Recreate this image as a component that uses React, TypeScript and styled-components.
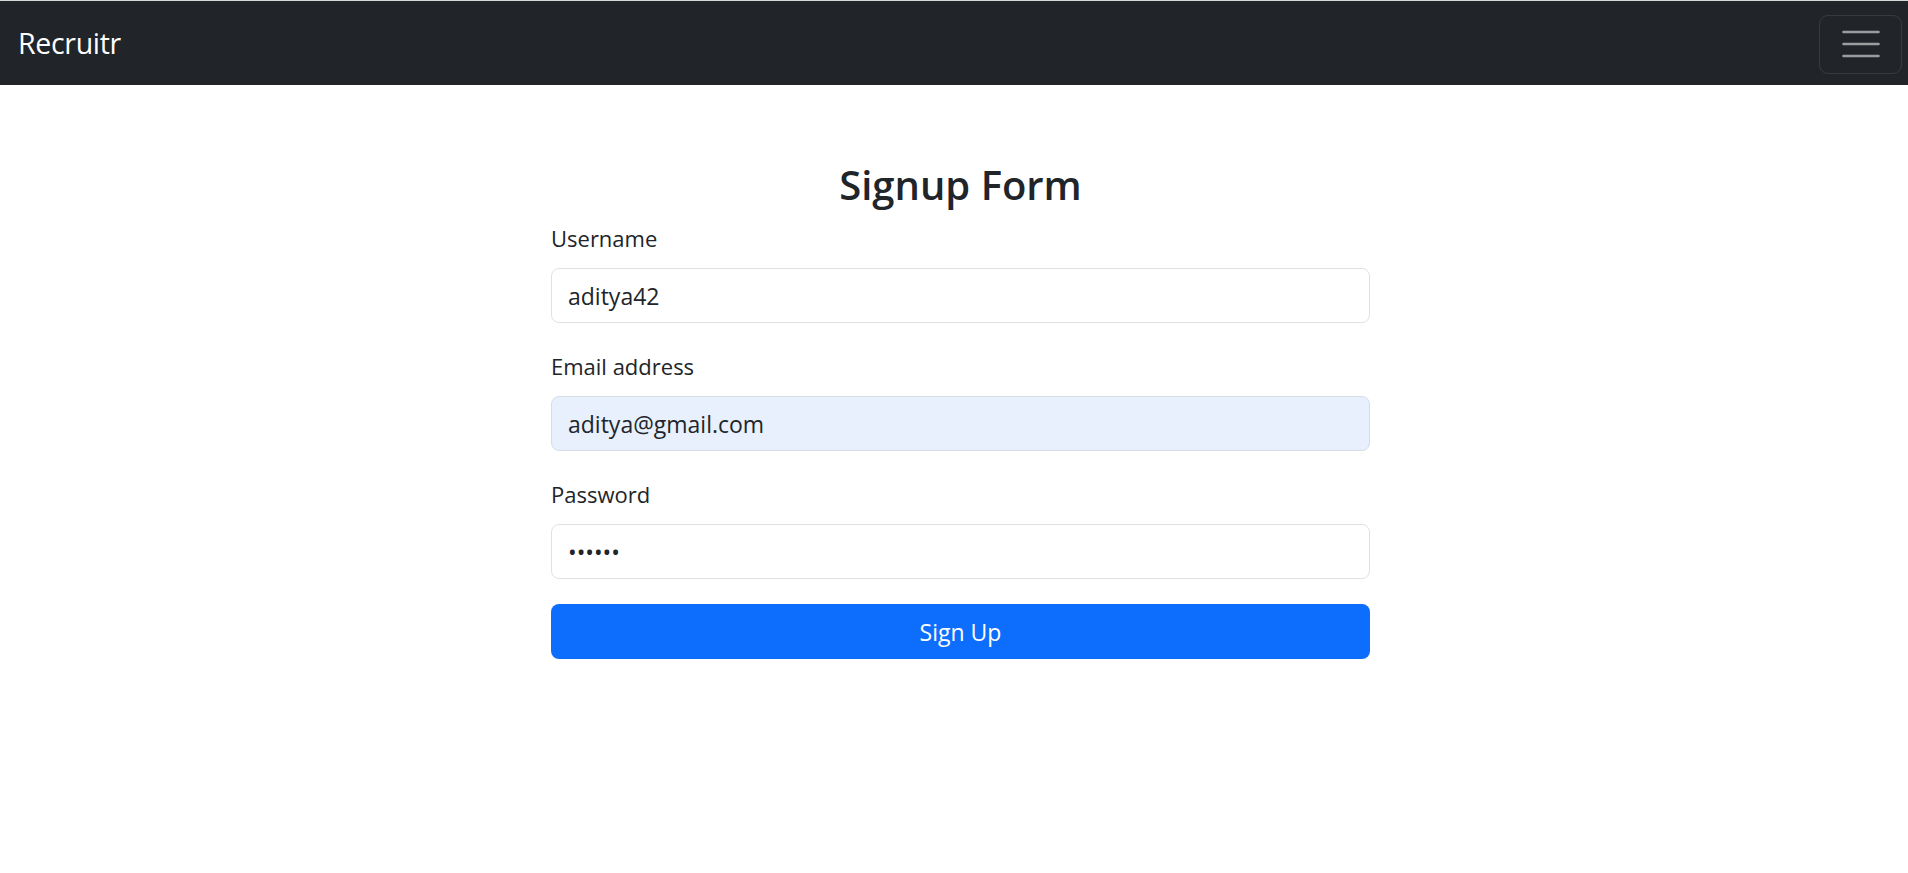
import React, { FC, ReactElement } from 'react'
import styled, { createGlobalStyle } from 'styled-components'

const GlobalStyle = createGlobalStyle`
  * {
    box-sizing: border-box;
  }

  body {
    margin: 0;
    background: #fff;
    color: #212529;
    font-family: "Open Sans", "Noto Sans", "Liberation Sans", sans-serif;
    font-size: 22px;
    line-height: 1.5;
  }
`

const Navbar = styled.nav`
  height: 85px;
  border-top: 1px solid #d9d9d9;
  background: #212529;
  display: flex;
  align-items: center;
  justify-content: space-between;
  padding: 0 6px 0 18px;
`

const Brand = styled.a`
  color: #fff;
  font-size: 28.5px;
  line-height: 1;
  text-decoration: none;
  letter-spacing: -0.3px;
`

const Toggler = styled.button`
  width: 83px;
  height: 59px;
  margin-top: 2px;
  background: transparent;
  border: 1px solid rgba(255, 255, 255, 0.1);
  border-radius: 9px;
  display: flex;
  align-items: center;
  justify-content: center;
  padding: 0;
  cursor: pointer;
`

const Main = styled.main`
  display: flex;
  justify-content: center;
  padding: 76px 0 0 13px;
`

const Form = styled.form`
  width: 819px;
`

const Title = styled.h2`
  margin: 0 0 14px;
  text-align: center;
  font-size: 40px;
  line-height: 48px;
  font-weight: 600;
`

const Field = styled.div<{ $last?: boolean }>`
  margin-bottom: ${p => (p.$last ? '25px' : '28px')};
`

const Label = styled.label`
  display: block;
  margin-bottom: 15px;
  font-size: 22px;
  line-height: 30px;
`

const Input = styled.input<{ $filled?: boolean }>`
  display: block;
  width: 100%;
  height: 55px;
  padding: 0 16px;
  font-family: inherit;
  font-size: 23px;
  color: #212529;
  background: ${p => (p.$filled ? '#e8f0fe' : '#fff')};
  border: 1px solid ${p => (p.$filled ? '#d6dde8' : '#dee2e6')};
  border-radius: 8px;
  outline: none;
`

const SubmitButton = styled.button`
  display: block;
  width: 100%;
  height: 55px;
  border: none;
  border-radius: 8px;
  background: #0d6efd;
  color: #fff;
  font-family: inherit;
  font-size: 23px;
  cursor: pointer;
`

const MenuIcon: FC = (): ReactElement => (
    <svg width="38" height="28" viewBox="0 0 38 28" fill="none">
        <path d="M1.5 2h35M1.5 14h35M1.5 26h35" stroke="rgba(255,255,255,0.55)" strokeWidth="2.6" strokeLinecap="round"/>
    </svg>
)

const App: FC = (): ReactElement => {
    return (
        <>
            <GlobalStyle/>
            <Navbar>
                <Brand href="#">Recruitr</Brand>
                <Toggler type="button" aria-label="Toggle navigation"><MenuIcon/></Toggler>
            </Navbar>
            <Main>
                <Form onSubmit={e => e.preventDefault()}>
                    <Title>Signup Form</Title>
                    <Field>
                        <Label htmlFor="username">Username</Label>
                        <Input id="username" type="text" defaultValue="aditya42"/>
                    </Field>
                    <Field>
                        <Label htmlFor="email">Email address</Label>
                        <Input id="email" type="email" defaultValue="aditya@gmail.com" $filled/>
                    </Field>
                    <Field $last>
                        <Label htmlFor="password">Password</Label>
                        <Input id="password" type="password" defaultValue="123456"/>
                    </Field>
                    <SubmitButton type="submit">Sign Up</SubmitButton>
                </Form>
            </Main>
        </>
    )
}

export default App
